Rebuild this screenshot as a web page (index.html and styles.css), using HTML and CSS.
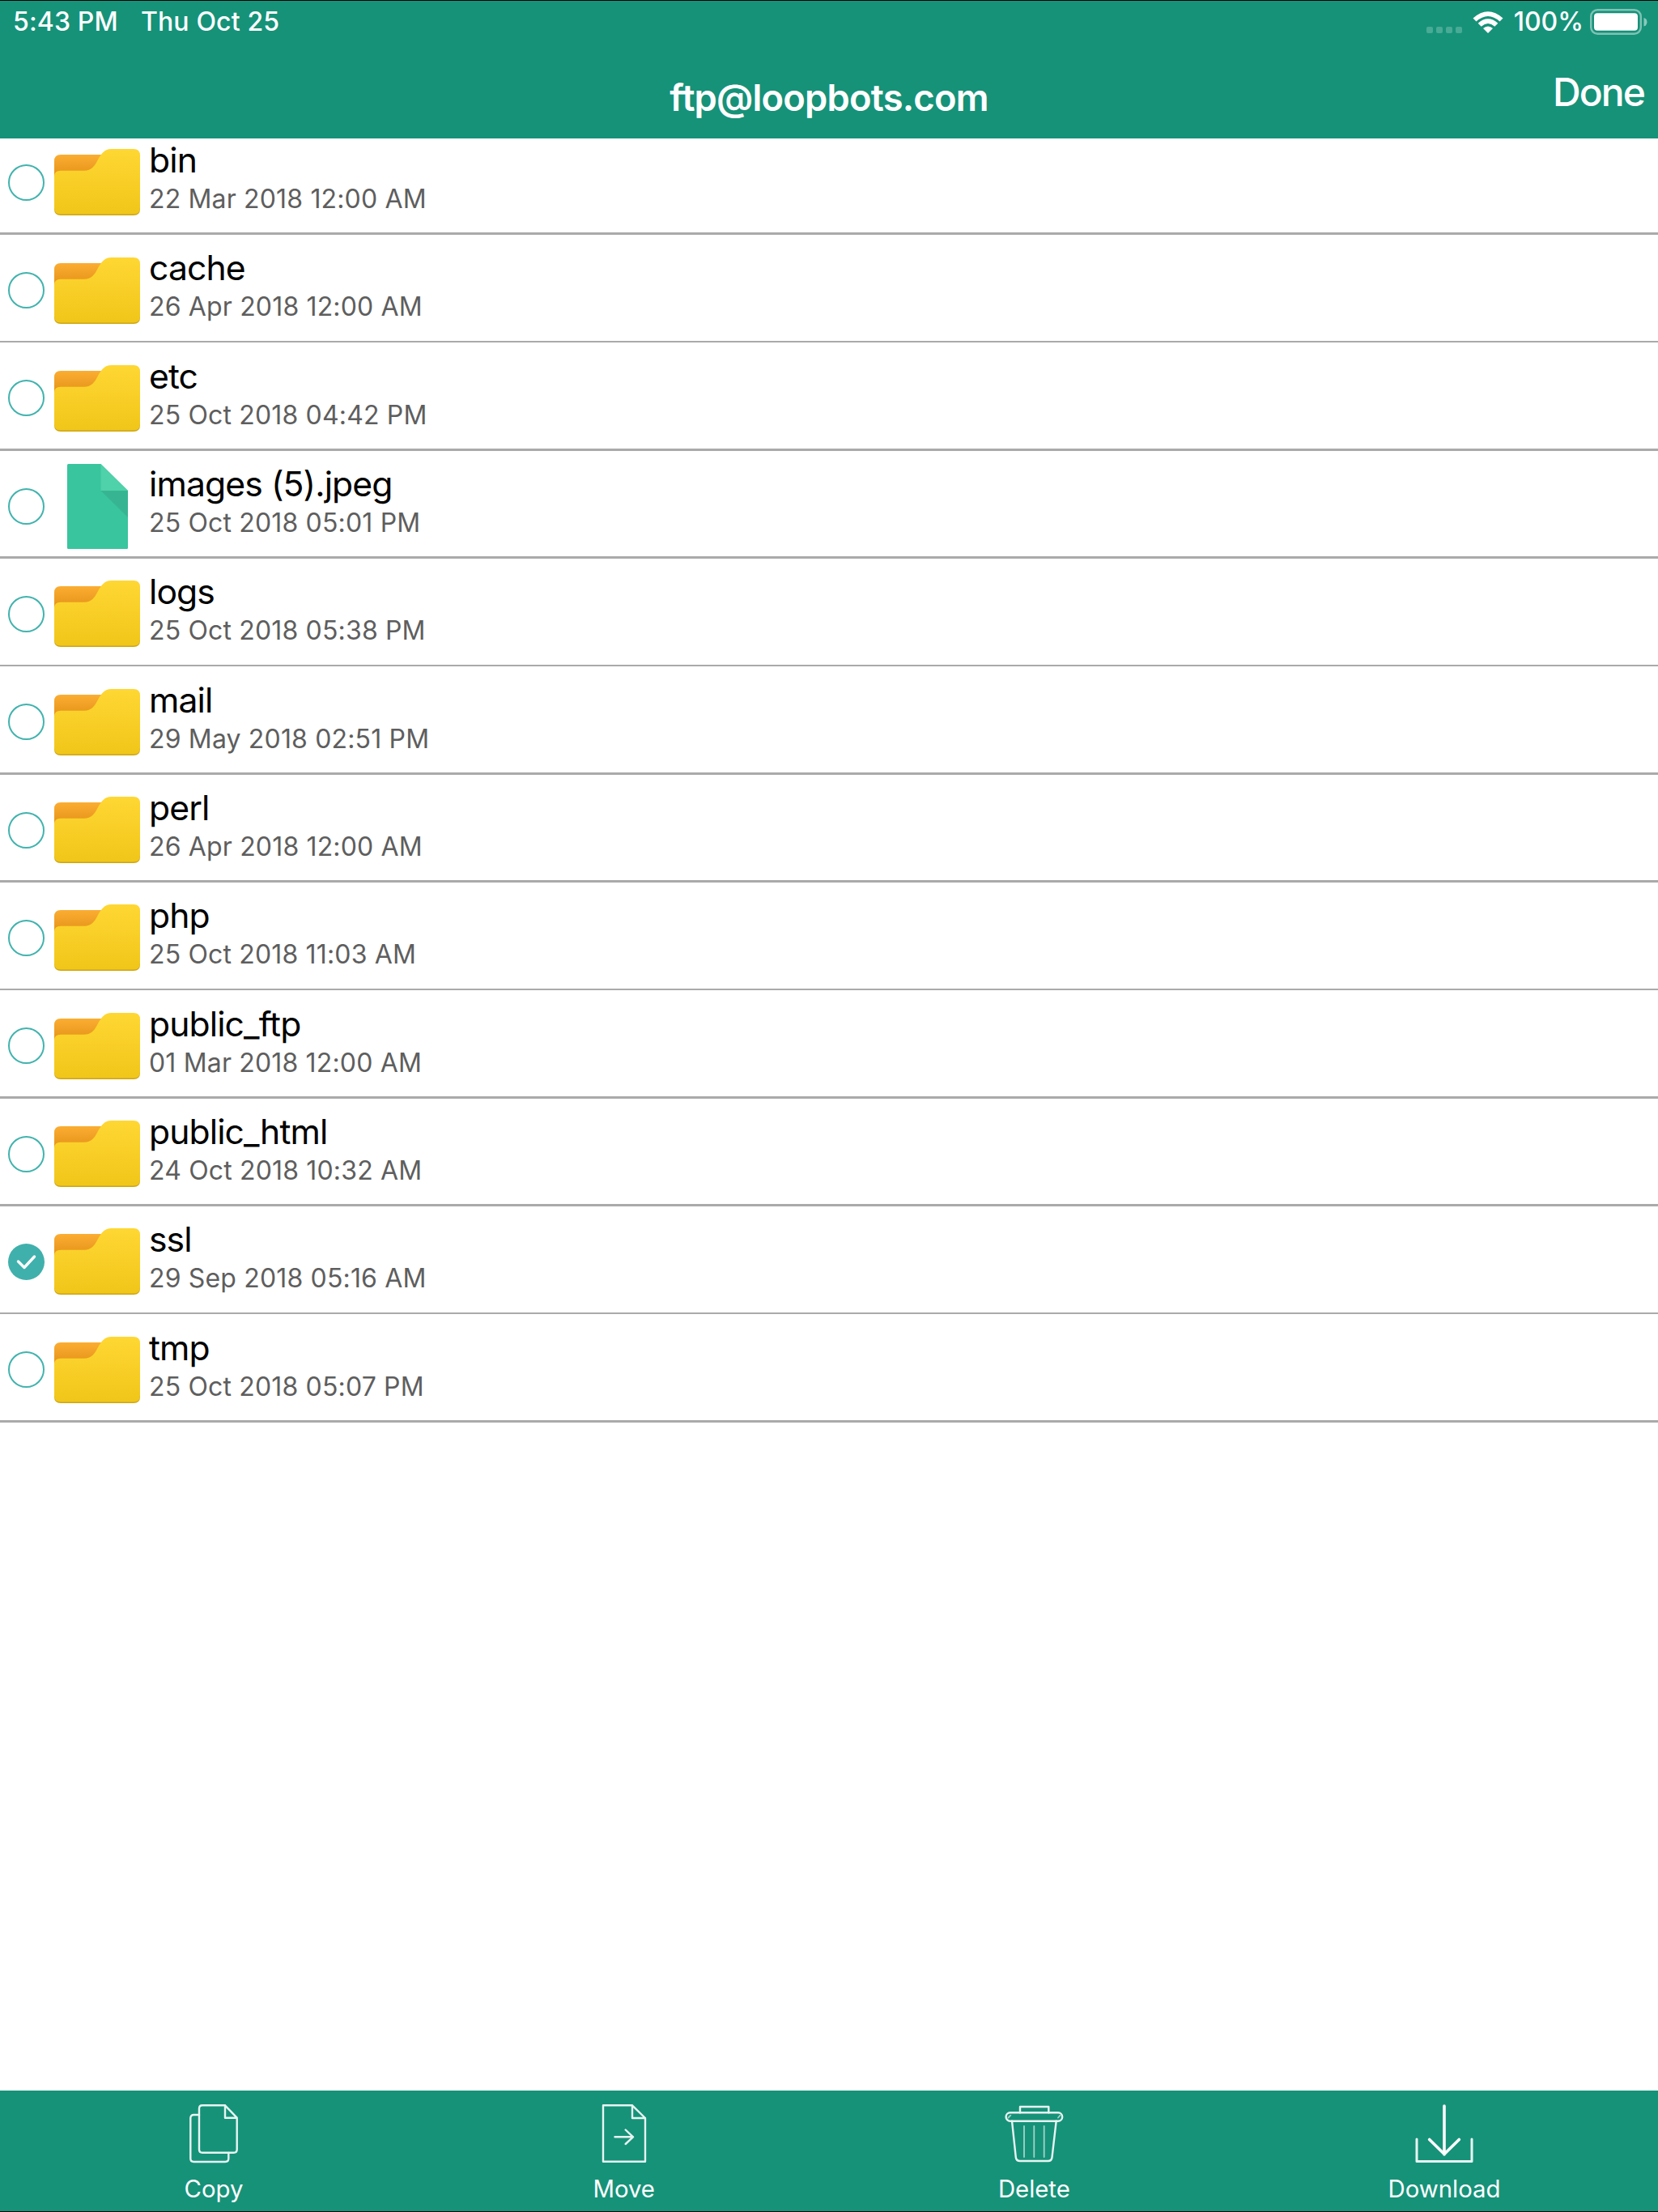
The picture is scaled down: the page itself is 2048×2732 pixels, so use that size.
FILE: index.html
```html
<!DOCTYPE html>
<html lang="en">
<head>
  <meta charset="UTF-8" />
  <meta name="viewport" content="width=device-width, initial-scale=1.0"/>
  <title>ftp@loopbots.com</title>
  <link rel="stylesheet" href="styles.css">
</head>
<body>
  <!-- shared icons -->
  <svg class="defs" width="0" height="0">
    <defs>
      <linearGradient id="front" x1="0" y1="0" x2="0" y2="1">
        <stop offset="0" stop-color="#ffd733"/>
        <stop offset="1" stop-color="#f1c61a"/>
      </linearGradient>
      <linearGradient id="back" x1="0" y1="0" x2="0" y2="1">
        <stop offset="0" stop-color="#fbad32"/>
        <stop offset="0.7" stop-color="#e8961c"/>
      </linearGradient>
    </defs>
    <symbol id="folder" viewBox="0 0 106 82">
      <path fill="url(#back)" d="M0 40V15Q0 7 8 7H70V40Z"/>
      <path fill="#cda512" d="M0 40H106V74Q106 82 98 82H8Q0 82 0 74Z"/>
      <path fill="url(#front)" d="M0 34Q0 26.7 8 26.7H37C46 26.7 50 21 53.500 14C58 6 62 0 70.500 0H98Q106 0 106 8V72.500Q106 80.500 98 80.500H8Q0 80.500 0 72.500Z"/>
    </symbol>
    <symbol id="file" viewBox="0 0 75 105">
      <path fill="#39c59e" d="M1.500 0H41.500L75 33V103.500Q75 105 73.500 105H1.500Q0 105 0 103.500V1.500Q0 0 1.500 0Z"/>
      <path fill="#4fd1a9" d="M41.500 0L75 33H41.500Z"/>
      <path fill="#37b592" d="M41.500 33H75V66Z"/>
    </symbol>
    <symbol id="check" viewBox="0 0 45 45">
      <path fill="none" stroke="#fff" stroke-width="3.4" stroke-linecap="round" stroke-linejoin="round" d="M12.500 22L20 29.500L32.500 16"/>
    </symbol>
  </svg>

  <header class="header">
    <div class="status">
      <span class="time">5:43 PM</span>
      <span class="day">Thu Oct 25</span>
      <div class="dots"><i></i><i></i><i></i><i></i></div>
      <svg class="wifi" viewBox="0 0 38 28">
        <path d="M0.500 8.500Q19 -8 37.500 8.500L33.500 12.500Q19 -0.500 4.500 12.500Z"/>
        <path d="M6.700 14.700Q19 4 31.300 14.700L27.300 18.700Q19 11.500 10.700 18.700Z"/>
        <path d="M13 21Q19 16 25 21L19 27Z"/>
      </svg>
      <span class="percent">100%</span>
      <svg class="battery" viewBox="0 0 71 32">
        <rect x="1.200" y="1.200" width="61.600" height="29.600" rx="8" fill="none" stroke="#fff" stroke-opacity=".45" stroke-width="2.400"/>
        <rect x="5" y="5.300" width="54" height="21.500" rx="4" fill="#fff"/>
        <path d="M66.500 11Q70.500 12 70.500 16.300T66.500 21.500Z" fill="#fff" fill-opacity=".5"/>
      </svg>
    </div>
    <div class="nav">
      <h1>ftp@loopbots.com</h1>
      <button class="done">Done</button>
    </div>
  </header>

  <main class="list">
    <div class="row">
      <span class="radio"></span>
      <svg class="folder"><use href="#folder"/></svg>
      <div class="info"><div class="name">bin</div><div class="date">22 Mar 2018 12:00 AM</div></div>
    </div>
    <div class="line"></div>
    <div class="row">
      <span class="radio"></span>
      <svg class="folder"><use href="#folder"/></svg>
      <div class="info"><div class="name">cache</div><div class="date">26 Apr 2018 12:00 AM</div></div>
    </div>
    <div class="line"></div>
    <div class="row">
      <span class="radio"></span>
      <svg class="folder"><use href="#folder"/></svg>
      <div class="info"><div class="name">etc</div><div class="date">25 Oct 2018 04:42 PM</div></div>
    </div>
    <div class="line"></div>
    <div class="row">
      <span class="radio"></span>
      <svg class="file"><use href="#file"/></svg>
      <div class="info"><div class="name">images (5).jpeg</div><div class="date">25 Oct 2018 05:01 PM</div></div>
    </div>
    <div class="line"></div>
    <div class="row">
      <span class="radio"></span>
      <svg class="folder"><use href="#folder"/></svg>
      <div class="info"><div class="name">logs</div><div class="date">25 Oct 2018 05:38 PM</div></div>
    </div>
    <div class="line"></div>
    <div class="row">
      <span class="radio"></span>
      <svg class="folder"><use href="#folder"/></svg>
      <div class="info"><div class="name">mail</div><div class="date">29 May 2018 02:51 PM</div></div>
    </div>
    <div class="line"></div>
    <div class="row">
      <span class="radio"></span>
      <svg class="folder"><use href="#folder"/></svg>
      <div class="info"><div class="name">perl</div><div class="date">26 Apr 2018 12:00 AM</div></div>
    </div>
    <div class="line"></div>
    <div class="row">
      <span class="radio"></span>
      <svg class="folder"><use href="#folder"/></svg>
      <div class="info"><div class="name">php</div><div class="date">25 Oct 2018 11:03 AM</div></div>
    </div>
    <div class="line"></div>
    <div class="row">
      <span class="radio"></span>
      <svg class="folder"><use href="#folder"/></svg>
      <div class="info"><div class="name">public_ftp</div><div class="date">01 Mar 2018 12:00 AM</div></div>
    </div>
    <div class="line"></div>
    <div class="row">
      <span class="radio"></span>
      <svg class="folder"><use href="#folder"/></svg>
      <div class="info"><div class="name">public_html</div><div class="date">24 Oct 2018 10:32 AM</div></div>
    </div>
    <div class="line"></div>
    <div class="row">
      <span class="radio checked"><svg><use href="#check"/></svg></span>
      <svg class="folder"><use href="#folder"/></svg>
      <div class="info"><div class="name">ssl</div><div class="date">29 Sep 2018 05:16 AM</div></div>
    </div>
    <div class="line"></div>
    <div class="row">
      <span class="radio"></span>
      <svg class="folder"><use href="#folder"/></svg>
      <div class="info"><div class="name">tmp</div><div class="date">25 Oct 2018 05:07 PM</div></div>
    </div>
    <div class="line"></div>
  </main>

  <footer class="toolbar">
    <button class="tool">
      <svg viewBox="0 0 72 72">
        <path d="M50 1.300H22Q18 1.300 18 5.300V55.700Q18 59.700 22 59.700H60.700Q64.700 59.700 64.700 55.700V16.700L50 1.300V16.700H64.700"/>
        <path d="M18 13H11.300Q7.300 13 7.300 17V67Q7.300 71 11.300 71H50.300Q54.300 71 54.300 67V60"/>
      </svg>
      <span>Copy</span>
    </button>
    <button class="tool">
      <svg viewBox="0 0 72 72">
        <path d="M46 1.300H10V70.700H62V17L46 1.300V17H62"/>
        <path d="M24.500 40.300H47M37.700 31.500L47 40.300L37.700 49"/>
      </svg>
      <span>Move</span>
    </button>
    <button class="tool">
      <svg viewBox="0 0 72 72">
        <path d="M19 10.300V3H54.300V10.300"/>
        <rect x="1.600" y="10.300" width="69.600" height="10.400" rx="5.200"/>
        <path d="M9 20.700L13.800 65.500Q14.300 70 19 70H53.600Q58 70 58.500 65.500L63.700 20.700"/>
        <path class="thin" d="M24 27V65M36.300 27V65M48.700 27V65M4.500 16.500L7.300 13.700M66 16.500L68.500 13.700"/>
      </svg>
      <span>Delete</span>
    </button>
    <button class="tool">
      <svg viewBox="0 0 72 72">
        <path class="bold" d="M36 2V62M17.700 43.500L36 61.500L54.300 43.500"/>
        <path class="tray" d="M2 43V70.500H70V43"/>
      </svg>
      <span>Download</span>
    </button>
  </footer>
</body>
</html>
```
FILE: styles.css
```css
:root {
  --bar: #169279;
  --accent: #42b3ae;
  --line: #aaaaaa;
}

* {
  box-sizing: border-box;
}

body {
  margin: 0;
  height: 2732px;
  font-family: Inter, "Liberation Sans", sans-serif;
  background: #fff;
  color: #000;
  display: flex;
  flex-direction: column;
}

button {
  border: none;
  background: none;
  padding: 0;
  color: #fff;
  font-family: inherit;
}

svg {
  display: block;
  flex-shrink: 0;
}

.defs {
  position: absolute;
}

/* top bar */
.header {
  position: relative;
  z-index: 1;
  height: 171px;
  flex-shrink: 0;
  background: var(--bar);
  border-top: 1px solid #000;
  color: #fff;
}

.status {
  display: flex;
  height: 53px;
  padding: 6px 13px 0 16px;
  font-size: 32px;
  line-height: 40px;
  font-weight: 500;
  letter-spacing: 0.15px;
}

.day {
  margin-left: 28px;
}

.dots {
  display: flex;
  gap: 4px;
  margin: 26px 13px 0 auto;
}

.dots i {
  width: 8px;
  height: 8px;
  border-radius: 2px;
  background: rgba(255, 255, 255, 0.22);
}

.wifi {
  width: 38px;
  height: 28px;
  margin-top: 7px;
  fill: #fff;
}

.percent {
  margin: 0 8px 0 13px;
  letter-spacing: 0;
}

.battery {
  width: 71px;
  height: 32px;
  margin-top: 4px;
}

.nav {
  display: grid;
  grid-template-columns: 1fr auto 1fr;
  padding: 0 16px;
}

.nav h1 {
  grid-column: 2;
  margin: 39px 0 0;
  font-size: 45.3px;
  font-weight: 600;
  line-height: 56px;
  letter-spacing: -0.8px;
}

.done {
  justify-self: end;
  align-self: start;
  margin-top: 32px;
  margin-right: 1px;
  font-size: 48px;
  line-height: 56px;
  font-weight: 500;
  letter-spacing: -1.9px;
}

/* file list, first row is partly scrolled under the header */
.list {
  flex: 1;
  margin-top: -14.333px;
}

.row {
  display: flex;
  height: 130.68px;
  padding-left: 10px;
}

.line {
  height: 2.6667px;
  background: var(--line);
}

.radio {
  width: 45px;
  height: 45px;
  margin-top: 46px;
  flex-shrink: 0;
  border: 2px solid var(--accent);
  border-radius: 50%;
}

.radio.checked {
  border: none;
  background: #40b0ac;
}

.radio svg {
  width: 45px;
  height: 45px;
}

.folder {
  width: 106px;
  height: 82px;
  margin: 27.5px 11px 0 12px;
}

.file {
  width: 75px;
  height: 105px;
  margin: 16.3px 26px 0 28px;
}

.info {
  padding-top: 17.3px;
}

.name {
  font-size: 42.667px;
  line-height: 48px;
  letter-spacing: -0.9px;
}

.date {
  margin-top: 4px;
  font-size: 32px;
  line-height: 40px;
  letter-spacing: 0.16px;
  color: #5e5e5e;
}

/* bottom bar */
.toolbar {
  display: flex;
  height: 150px;
  flex-shrink: 0;
  padding: 17px 10.667px 0;
  background: var(--bar);
  border-bottom: 1px solid #000;
}

.tool {
  flex: 1;
  display: flex;
  flex-direction: column;
  align-items: center;
  font-size: 29.333px;
  line-height: 36px;
}

.tool span {
  margin-top: 15px;
}

.tool svg {
  width: 72px;
  height: 72px;
  overflow: visible;
  fill: none;
  stroke: #e8f5f2;
  stroke-width: 2.4;
  stroke-linecap: round;
  stroke-linejoin: round;
}

.tool .thin {
  stroke-width: 1.8;
  stroke: #a2d3c9;
}

.tool .bold {
  stroke: #fff;
  stroke-width: 3.6;
}

.tool .tray {
  stroke-width: 3;
}
```
